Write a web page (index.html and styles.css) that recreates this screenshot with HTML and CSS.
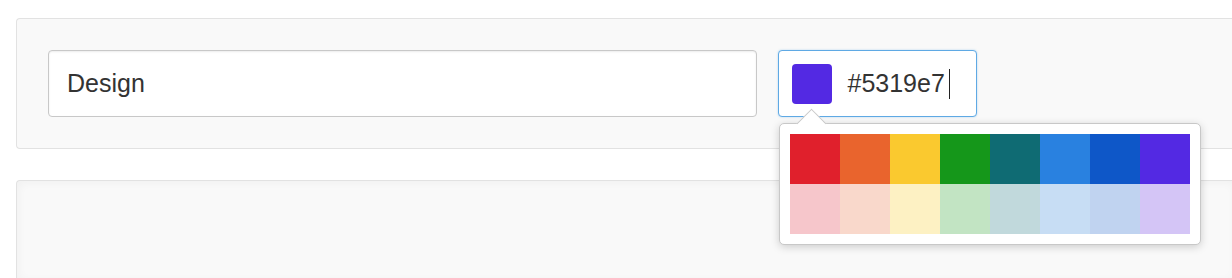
FILE: index.html
```html
<!DOCTYPE html>
<html>
<head>
<meta charset="utf-8">
<link rel="stylesheet" href="styles.css">
</head>
<body>
<div class="page">
  <div class="card card-form">
    <div class="field field-name">Design</div>
    <div class="field-wrap">
      <div class="field field-color">
        <span class="chip"></span>
        <span class="hex">#5319e7</span><span class="caret"></span>
      </div>
      <div class="popover">
        <span class="arrow"></span>
        <div class="palette">
          <span class="sw c1"></span><span class="sw c2"></span><span class="sw c3"></span><span class="sw c4"></span>
          <span class="sw c5"></span><span class="sw c6"></span><span class="sw c7"></span><span class="sw c8"></span>
          <span class="sw l1"></span><span class="sw l2"></span><span class="sw l3"></span><span class="sw l4"></span>
          <span class="sw l5"></span><span class="sw l6"></span><span class="sw l7"></span><span class="sw l8"></span>
        </div>
      </div>
    </div>
  </div>
  <div class="card card-body"></div>
</div>
</body>
</html>
```
FILE: styles.css
```css
html, body {
  margin: 0;
  padding: 0;
  background: #fff;
  overflow: hidden;
  font-family: "Liberation Sans", Arial, sans-serif;
}
.page {
  box-sizing: border-box;
  width: 1232px;
  height: 278px;
  padding: 18px 0 0 16px;
  display: flex;
  flex-direction: column;
  gap: 31px;
}
.card {
  border: 1px solid #e2e2e2;
  border-right: none;
  background: #f9f9f9;
  border-radius: 4px 0 0 4px;
}
.card-form {
  padding: 31px;
  display: flex;
  gap: 21px;
  align-items: flex-start;
}
.card-body {
  flex: 1;
  border-bottom: none;
  border-radius: 4px 0 0 0;
  box-shadow: inset 2px 2px 8px rgba(0, 0, 0, 0.035);
}
.field {
  box-sizing: border-box;
  height: 67px;
  border-radius: 4px;
  background: #fff;
  font-size: 25px;
  color: #333;
  display: flex;
  align-items: center;
}
.field-name {
  width: 709px;
  border: 1.5px solid #c8c8c8;
  padding-left: 18px;
  box-shadow: inset 0 1px 2px rgba(0, 0, 0, 0.08);
}
.field-wrap {
  position: relative;
}
.field-color {
  width: 199px;
  border: 1.5px solid #5fa9e4;
  box-shadow: 0 0 2px rgba(102, 175, 233, 0.5);
  padding-left: 12.5px;
}
.chip {
  width: 40px;
  height: 40px;
  border-radius: 4px;
  background: #5329e3;
  margin-right: 16px;
}
.hex {
  color: #333;
}
.caret {
  width: 1.5px;
  height: 30px;
  background: #222;
  margin-left: 4px;
}
.popover {
  position: absolute;
  top: 73px;
  left: 1px;
  padding: 10px;
  background: #fff;
  border: 1.5px solid #c8c8c8;
  border-radius: 5px;
  box-shadow: 0 2px 8px rgba(0, 0, 0, 0.18);
}
.arrow {
  position: absolute;
  top: -11px;
  left: 21px;
  width: 20px;
  height: 20px;
  background: #fff;
  border-top: 1.5px solid #c8c8c8;
  border-left: 1.5px solid #c8c8c8;
  transform: rotate(45deg);
}
.palette {
  position: relative;
  display: grid;
  grid-template-columns: repeat(8, 50px);
  grid-auto-rows: 50px;
}
.c1 { background: #e0202c; }
.c2 { background: #e9642d; }
.c3 { background: #fac92f; }
.c4 { background: #15971a; }
.c5 { background: #0f6b73; }
.c6 { background: #2981e0; }
.c7 { background: #0e57c8; }
.c8 { background: #5329e3; }
.l1 { background: #f6c6cb; }
.l2 { background: #f9d8cb; }
.l3 { background: #fdf1c3; }
.l4 { background: #c2e4c3; }
.l5 { background: #c1d9dc; }
.l6 { background: #c7ddf4; }
.l7 { background: #c0d3f0; }
.l8 { background: #d4c5f6; }
```
